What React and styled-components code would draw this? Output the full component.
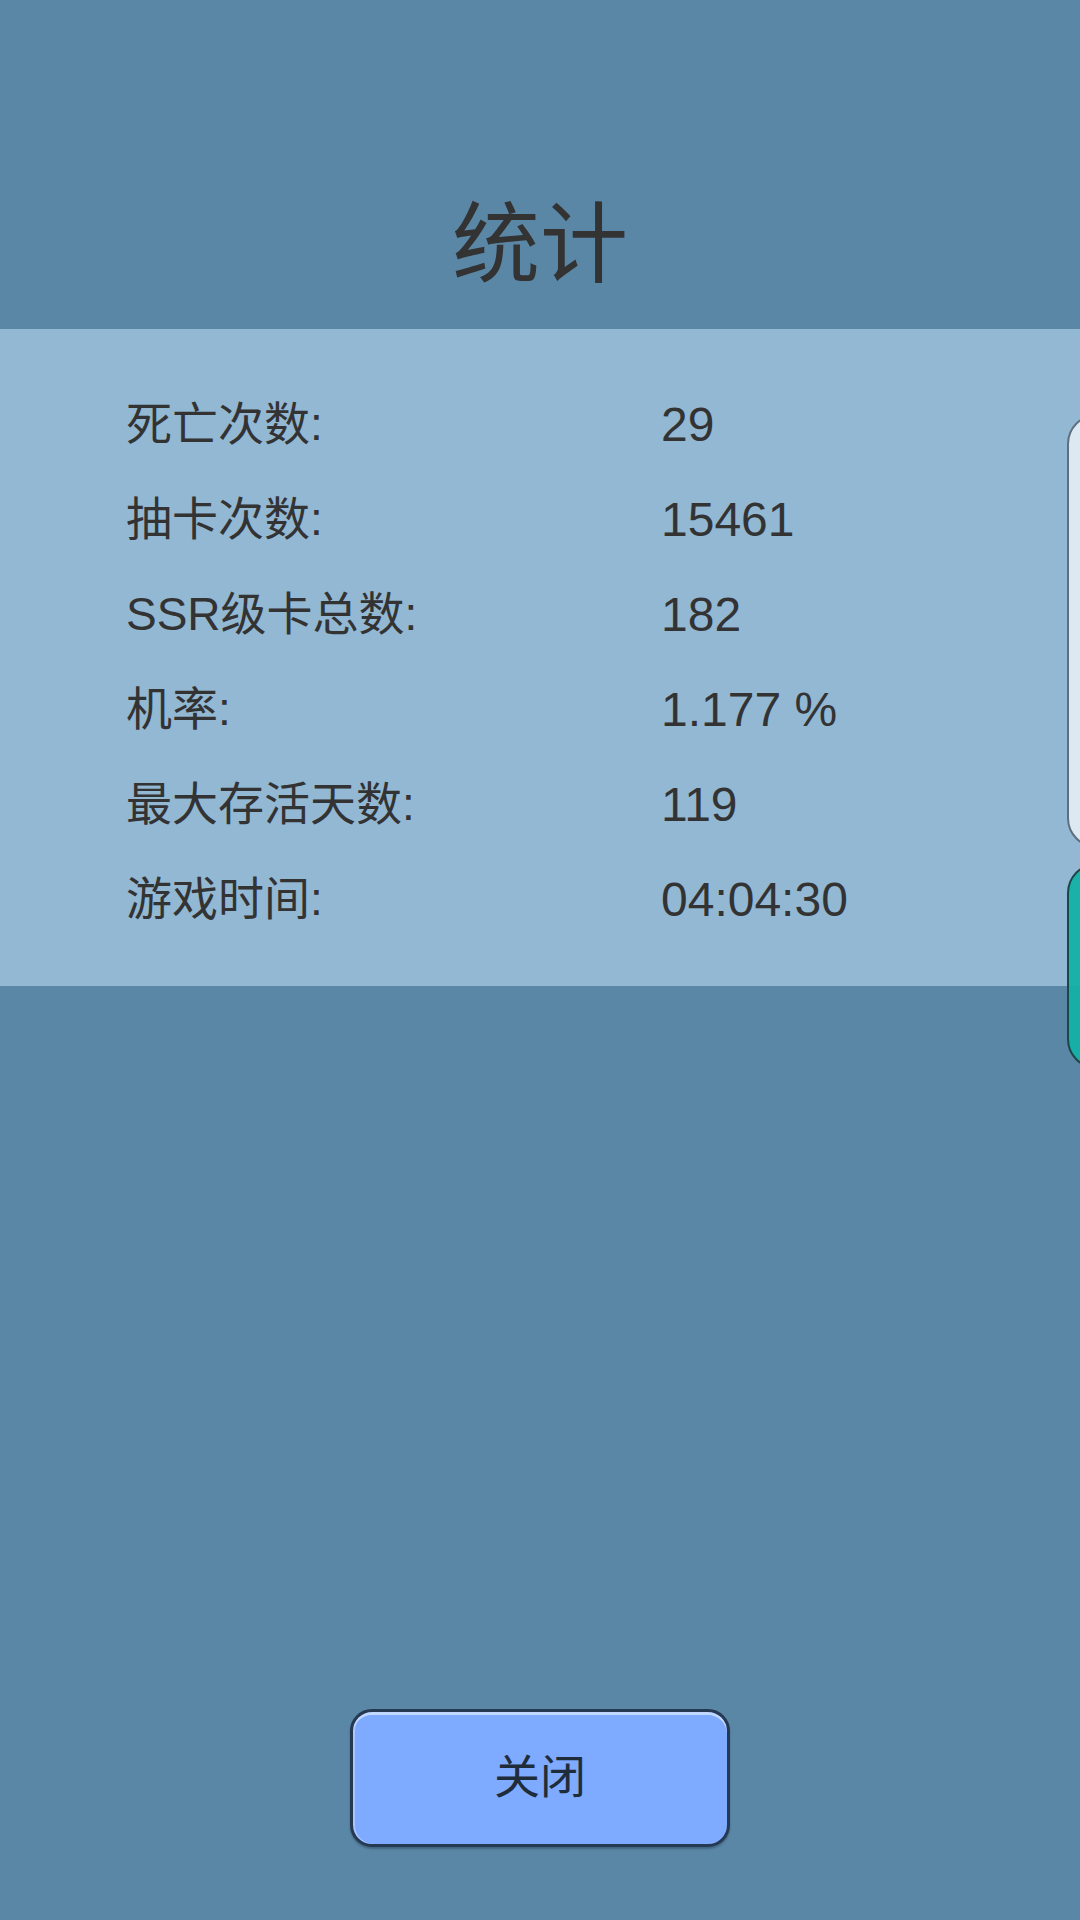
import React from "react";
import styled, { createGlobalStyle } from "styled-components";

const GlobalStyle = createGlobalStyle`
  html, body { margin: 0; padding: 0; }
  body {
    background: #5b87a6;
    font-family: "Liberation Sans", "Noto Sans CJK SC", sans-serif;
  }
`;

const Screen = styled.div`
  position: relative;
  width: 1080px;
  height: 1920px;
  overflow: hidden;
  background: #5b87a6;
  display: flex;
  flex-direction: column;
  color: #333333;
`;

const Header = styled.header`
  height: 329px;
  display: flex;
  align-items: center;
  justify-content: center;
  padding-top: 144px;
  box-sizing: border-box;
`;

const Title = styled.h1`
  margin: 0;
  font-family: "Noto Sans CJK SC", sans-serif;
  font-weight: 400;
  font-size: 88px;
  line-height: 1;
  color: #333333;
`;

const Band = styled.section`
  height: 657px;
  box-sizing: border-box;
  background: #92b8d4;
  padding: 48px 0 39px 126px;
  display: flex;
  flex-direction: column;
`;

const Row = styled.div`
  height: 95px;
  display: grid;
  grid-template-columns: 535px 1fr;
  align-items: center;
`;

const Label = styled.span`
  font-family: "Liberation Sans", "Noto Sans CJK SC", sans-serif;
  font-size: 46px;
  line-height: 1;
  padding-bottom: 1px;
  color: #333333;
`;

const Value = styled.span`
  font-family: "Liberation Sans", "Noto Sans CJK SC", sans-serif;
  font-size: 48px;
  color: #333333;
`;

const Footer = styled.footer`
  margin-top: auto;
  display: flex;
  justify-content: center;
  padding-bottom: 73px;
`;

const CloseButton = styled.button`
  width: 380px;
  height: 138px;
  box-sizing: border-box;
  border: 3px solid #253a52;
  border-radius: 22px;
  background: #7eaaff;
  box-shadow: inset 0 3px 0 #c2d8ff, inset 2px 0 0 #a8c6ff, 0 2px 2px rgba(20, 40, 60, 0.35);
  font-family: "Noto Sans CJK SC", sans-serif;
  font-size: 46px;
  color: #1f2d3a;
  padding: 0 0 10px;
  cursor: pointer;
`;

const SideCard = styled.div`
  position: absolute;
  left: 1067px;
  width: 60px;
  box-sizing: border-box;
  border-radius: 30px;
  top: ${(p) => p.$top}px;
  height: ${(p) => p.$height}px;
  background: ${(p) => p.$bg};
  border: 2px solid ${(p) => p.$border};
`;

const stats = [
  ["死亡次数:", "29"],
  ["抽卡次数:", "15461"],
  ["SSR级卡总数:", "182"],
  ["机率:", "1.177 %"],
  ["最大存活天数:", "119"],
  ["游戏时间:", "04:04:30"],
];

export default function App() {
  return (
    <>
      <GlobalStyle />
      <Screen>
        <Header>
          <Title>统计</Title>
        </Header>
        <Band>
          {stats.map(([label, value]) => (
            <Row key={label}>
              <Label>{label}</Label>
              <Value>{value}</Value>
            </Row>
          ))}
        </Band>
        <Footer>
          <CloseButton>关闭</CloseButton>
        </Footer>
        <SideCard $top={414} $height={434} $bg="#dce8f2" $border="#5f6f7c" />
        <SideCard $top={863} $height={206} $bg="rgba(20, 176, 166, 0.95)" $border="#1d4646" />
      </Screen>
    </>
  );
}
